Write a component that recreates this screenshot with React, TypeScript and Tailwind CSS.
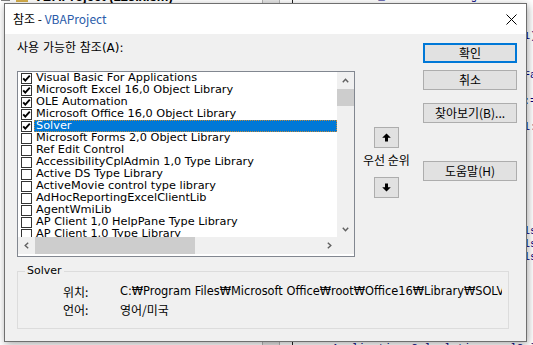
import React from "react";

const rows: { t: string; c: boolean; sel?: boolean }[] = [
  { t: "Visual Basic For Applications", c: true },
  { t: "Microsoft Excel 16,0 Object Library", c: true },
  { t: "OLE Automation", c: true },
  { t: "Microsoft Office 16,0 Object Library", c: true },
  { t: "Solver", c: true, sel: true },
  { t: "Microsoft Forms 2,0 Object Library", c: false },
  { t: "Ref Edit Control", c: false },
  { t: "AccessibilityCplAdmin 1,0 Type Library", c: false },
  { t: "Active DS Type Library", c: false },
  { t: "ActiveMovie control type library", c: false },
  { t: "AdHocReportingExcelClientLib", c: false },
  { t: "AgentWmiLib", c: false },
  { t: "AP Client 1,0 HelpPane Type Library", c: false },
  { t: "AP Client 1,0 Type Library", c: false },
];

const codeLines: string[] = [
  "Dim Num_Points As Long",
  "Dim i As Long",
  "",
  "Set ws = ThisWorkbook.Sheets(1)",
  "Num_Points = 100",
  "",
  "Application.ScreenUpdating = False",
  "",
  "SolverReset: SolverOk SetCell:=\"$B$1\"",
  "",
  "SolverAdd CellRef:=\"$A$1\", Rel:=1",
  "",
  "",
  "",
  "",
  "",
  "",
  "",
  "ws.Cells(i, 2).Value = ws.Cells(i, 1)",
  "ws.Cells(i, 3).Value = ws.Cells(i, 1)",
  "ws.Cells(i, 4).Value = ws.Cells(i, 1)",
  "",
  "",
  "",
  "",
  "",
  "",
  "Application.Calculation = xlCalculationAutomatic",
];

function Check({ checked }: { checked: boolean }) {
  return (
    <svg width="11" height="11" viewBox="0 0 11 11" className="shrink-0 mt-[1px]">
      <rect x="0.5" y="0.5" width="10" height="10" fill="#ffffff" stroke="#333333" />
      {checked && (
        <path d="M2.2 5.3 L4.3 7.6 L8.8 2.6" fill="none" stroke="#000000" strokeWidth="1.9" />
      )}
    </svg>
  );
}

function Chevron({ dir }: { dir: "up" | "down" | "left" | "right" }) {
  const d =
    dir === "up"
      ? "M0.8 4.2 L3.5 1.2 L6.2 4.2"
      : dir === "down"
      ? "M0.8 1.8 L3.5 4.8 L6.2 1.8"
      : dir === "left"
      ? "M4.2 0.8 L1.2 3.5 L4.2 6.2"
      : "M1.8 0.8 L4.8 3.5 L1.8 6.2";
  const vert = dir === "up" || dir === "down";
  return (
    <svg width={vert ? 7 : 6} height={vert ? 6 : 7} viewBox={vert ? "0 0 7 6" : "0 0 6 7"}>
      <path d={d} fill="none" stroke="#606060" strokeWidth="1.4" />
    </svg>
  );
}

function Btn({ children, primary, className }: { children: React.ReactNode; primary?: boolean; className?: string }) {
  return (
    <div
      className={
        "h-[20px] w-[94px] flex items-center justify-center bg-[#e1e1e1] text-[12px] leading-[12px] text-black font-['Noto_Sans_CJK_KR',sans-serif] " +
        (primary ? "border-2 border-[#0078d7] " : "border border-[#adadad] ") +
        (className || "")
      }
    >
      {children}
    </div>
  );
}

function ArrowBtn({ up, className }: { up: boolean; className?: string }) {
  return (
    <div className={"w-[25px] h-[21px] border border-[#adadad] bg-[#e1e1e1] flex items-center justify-center " + (className || "")}>
      <svg width="9" height="9" viewBox="0 0 9 9">
        {up ? (
          <path d="M4.5 0.5 L8.8 4.8 L6 4.8 L6 8.6 L3 8.6 L3 4.8 L0.2 4.8 Z" fill="#000000" />
        ) : (
          <path d="M4.5 8.5 L8.8 4.2 L6 4.2 L6 0.4 L3 0.4 L3 4.2 L0.2 4.2 Z" fill="#000000" />
        )}
      </svg>
    </div>
  );
}

export default function App() {
  return (
    <div className="relative w-[533px] h-[345px] overflow-hidden bg-white font-['DejaVu_Sans','Noto_Sans_CJK_KR',sans-serif]">
      {/* Background: VBA editor */}
      <div className="flex h-full">
        <div className="w-[262px] shrink-0 bg-white flex flex-col overflow-hidden">
          <div className="-mt-[10px] h-[13px] flex items-center gap-[6px] pl-[1px]">
            <span className="w-[9px] h-[9px] border border-[#808080] bg-white" />
            <span className="w-[12px] h-[10px] bg-[#d8b04c]" />
            <span className="text-[13px] leading-[13px] font-bold text-black font-['Liberation_Sans',sans-serif] whitespace-nowrap">
              VBAProject (123.xlsm)
            </span>
          </div>
        </div>
        <div className="w-[18px] shrink-0 bg-[#e6e6e6] border-x border-[#b4b4b4]" />
        <div className="w-[12px] shrink-0 bg-white" />
        <div className="w-[1px] shrink-0 bg-[#202020]" />
        <div className="flex-1 min-w-0 overflow-hidden pl-[39px] flex flex-col -mt-[9px]">
          {codeLines.map((l, i) => (
            <div
              key={i}
              className="h-[13px] shrink-0 leading-[13px] text-[11px] whitespace-pre text-[#000080] font-['Liberation_Mono',monospace]"
            >
              {l || " "}
            </div>
          ))}
        </div>
      </div>

      {/* Dialog window */}
      <div className="absolute left-[4px] top-[3px] w-[523px] h-[339px] border border-[#6f6f6f] bg-[#f0f0f0] shadow-[1px_2px_8px_rgba(0,0,0,0.35)] flex flex-col">
        <div className="h-[30px] shrink-0 bg-white flex items-center justify-between pl-[8px] pr-[9px]">
          <span className="text-[12px] leading-[14px] text-black font-['Noto_Sans_CJK_KR',sans-serif]">
            참조 - <span className="text-[#2a5caa]">VBAProject</span>
          </span>
          <svg width="11" height="11" viewBox="0 0 11 11">
            <path d="M0.5 0.5 L10.5 10.5 M10.5 0.5 L0.5 10.5" stroke="#000000" strokeWidth="1" />
          </svg>
        </div>

        <div className="flex-1 pl-[12px] pt-[8px] flex flex-col">
          <div className="flex">
            {/* list column */}
            <div className="w-[338px] flex flex-col">
              <div className="h-[12px] leading-[12px] text-[12px] text-black whitespace-nowrap">사용 가능한 참조(A):</div>
              <div className="mt-[17px] h-[186px] border border-[#828790] bg-white flex flex-col">
                <div className="h-[165px] flex">
                  <div className="w-[319px] overflow-hidden flex flex-col">
                    {rows.map((r, i) => (
                      <div key={i} className="h-[12px] shrink-0 flex items-start pl-[3px]">
                        <Check checked={r.c} />
                        <div
                          className={
                            "ml-[2px] flex-1 h-[12px] px-[1px] text-[11.3px] leading-[10px] whitespace-nowrap overflow-hidden " +
                            (r.sel
                              ? "bg-[#0078d7] text-white border border-dotted border-[#c08a3a]"
                              : "text-black border border-transparent")
                          }
                        >
                          {r.t}
                        </div>
                      </div>
                    ))}
                  </div>
                  <div className="w-[17px] bg-[#f0f0f0] flex flex-col">
                    <div className="h-[17px] flex items-center justify-center">
                      <Chevron dir="up" />
                    </div>
                    <div className="h-[17px] bg-[#cdcdcd]" />
                    <div className="flex-1" />
                    <div className="h-[17px] flex items-center justify-center">
                      <Chevron dir="down" />
                    </div>
                  </div>
                </div>
                <div className="h-[17px] flex">
                  <div className="w-[319px] bg-[#f0f0f0] flex">
                    <div className="w-[17px] flex items-center justify-center">
                      <Chevron dir="left" />
                    </div>
                    <div className="w-[160px] bg-[#cdcdcd]" />
                    <div className="flex-1" />
                    <div className="w-[17px] flex items-center justify-center">
                      <Chevron dir="right" />
                    </div>
                  </div>
                  <div className="w-[17px] bg-[#f0f0f0]" />
                </div>
              </div>
            </div>

            {/* priority column */}
            <div className="w-[68px] pr-[5px] flex flex-col items-center">
              <ArrowBtn up className="mt-[85px]" />
              <div className="mt-[6px] h-[12px] leading-[12px] text-[12px] text-black whitespace-nowrap font-['Noto_Sans_CJK_KR',sans-serif]">
                우선 순위
              </div>
              <ArrowBtn up={false} className="mt-[11px]" />
            </div>

            {/* buttons column */}
            <div className="w-[94px] flex flex-col mt-[1px]">
              <Btn primary>확인</Btn>
              <Btn className="mt-[7px]">취소</Btn>
              <Btn className="mt-[13px]">찾아보기(B)...</Btn>
              <Btn className="mt-[38px]">도움말(H)</Btn>
            </div>
          </div>

          <fieldset className="mt-[8px] w-[492px] h-[64px] border border-[#dcdcdc]">
            <legend className="ml-[7px] px-[2px] text-[11px] leading-[12px] text-black">Solver</legend>
            <div className="pl-[45px] pt-[6px] flex flex-col">
              <div className="h-[18px] flex items-center">
                <span className="w-[57px] text-[12px] text-black font-['Noto_Sans_CJK_KR',sans-serif]">위치:</span>
                <span className="w-[382px] overflow-hidden whitespace-nowrap text-[11.4px] text-black">
                  C:₩Program Files₩Microsoft Office₩root₩Office16₩Library₩SOLVER₩SOLVER.XLAM
                </span>
              </div>
              <div className="h-[18px] flex items-center">
                <span className="w-[57px] text-[12px] text-black font-['Noto_Sans_CJK_KR',sans-serif]">언어:</span>
                <span className="text-[12px] text-black font-['Noto_Sans_CJK_KR',sans-serif]">영어/미국</span>
              </div>
            </div>
          </fieldset>
        </div>
      </div>
    </div>
  );
}
